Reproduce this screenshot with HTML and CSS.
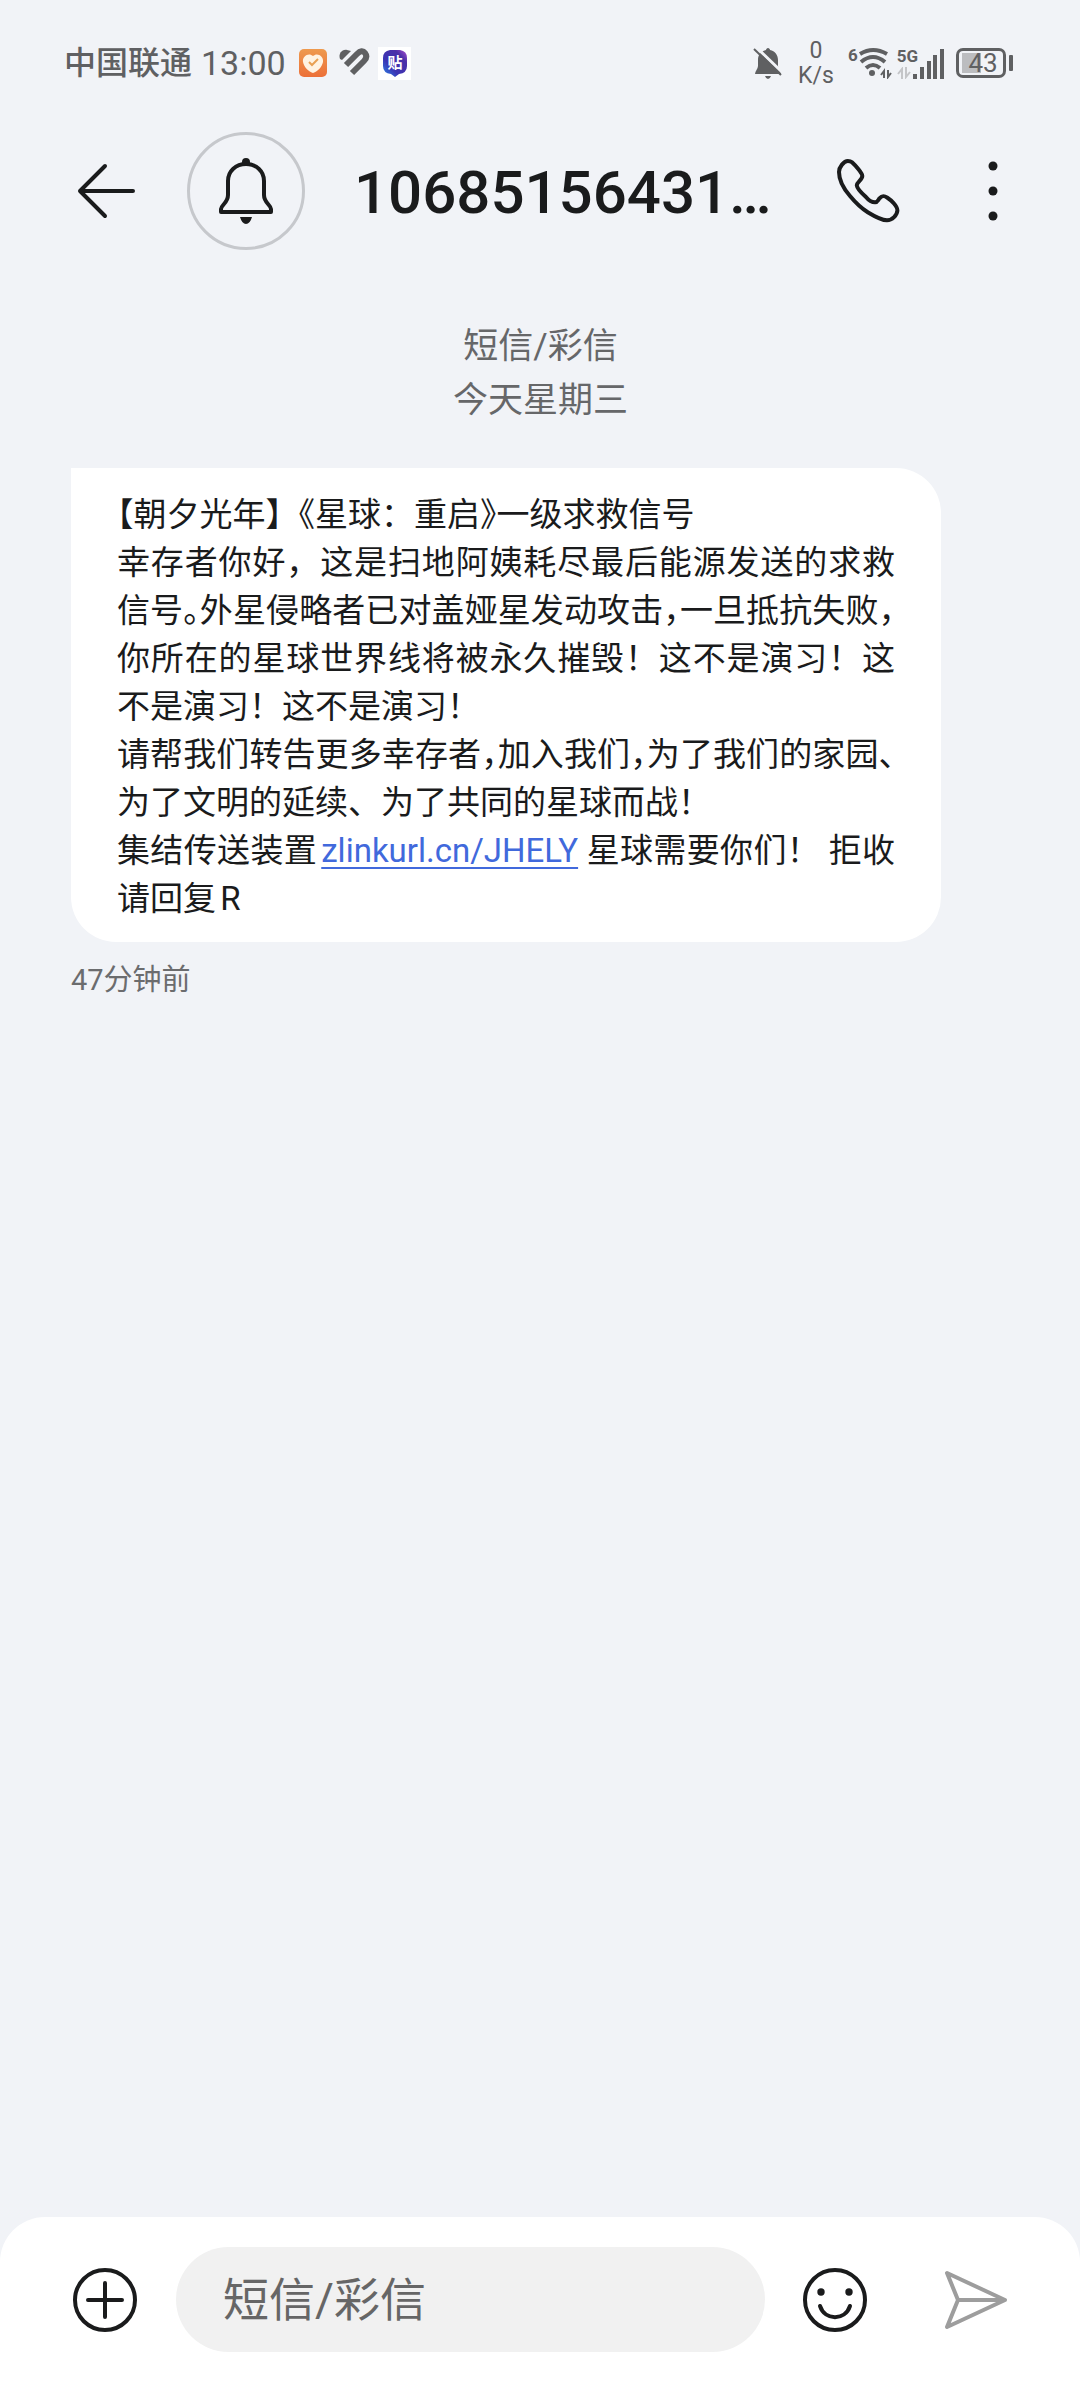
FILE: index.html
```html
<!DOCTYPE html>
<html lang="zh-CN">
<head>
<meta charset="utf-8">
<meta name="viewport" content="width=device-width, initial-scale=1">
<title>短信/彩信</title>
<link rel="stylesheet" href="styles.css">
</head>
<body>
<div class="app">
  <div class="status">
    <div class="status-left">
      <span class="carrier">中国联通</span>
      <span class="clock">13:00</span>
      <svg class="app-heart" viewBox="0 0 30 30" aria-hidden="true">
        <defs><linearGradient id="orange" x1="0" y1="0" x2="0" y2="1"><stop offset="0" stop-color="#ee9a4e"/><stop offset="1" stop-color="#ec7038"/></linearGradient></defs>
        <rect x="1" y="1" width="28" height="28" rx="5" fill="url(#orange)"/>
        <path d="M15 8C11 4 4 8 5 14C6 19 10 23 15 25C20 23 24 19 25 14C26 8 19 4 15 8Z" fill="#fff3e2"/>
        <path d="M11 14L14 17L20 11" fill="none" stroke="#e9a052" stroke-width="2"/>
      </svg>
      <svg class="app-strap" viewBox="0 0 32 30" aria-hidden="true">
        <path d="M2 11C0 6 4 1 9 2L13 3L4 12Z" fill="#5f6062"/>
        <path d="M8 17L19 6Q24 1 27 5Q30 9 26 13L14 25" fill="none" stroke="#5f6062" stroke-width="6"/>
      </svg>
      <svg class="app-tie" viewBox="0 0 33 33" aria-hidden="true">
        <defs><linearGradient id="violet" x1="0" y1="1" x2="1" y2="0"><stop offset="0" stop-color="#2b8bea"/><stop offset=".35" stop-color="#3b35b4"/><stop offset=".75" stop-color="#4a2fa8"/><stop offset="1" stop-color="#b04fd0"/></linearGradient></defs>
        <rect width="33" height="33" fill="#fff"/>
        <path d="M12 3H22Q29 4 29 11V19Q29 26 21 27L17 30L13 27Q5 26 5 19V11Q5 4 12 3Z" fill="url(#violet)"/>
        <text x="17" y="21" text-anchor="middle" class="tie-text">贴</text>
      </svg>
    </div>
    <div class="status-right">
      <svg class="mute" viewBox="0 0 30 34" aria-hidden="true">
        <path d="M15 2C16 2 17 3 17 4C22 5 25 9 25 14V20C25 23 28 25 28 28H2C2 25 5 23 5 20V14C5 9 8 5 13 4C13 3 14 2 15 2ZM12 30H18Q17 33 15 33Q13 33 12 30Z" fill="#5f6062"/>
        <path d="M3 1L30 27" stroke="#f1f3f7" stroke-width="3"/>
        <path d="M1 3L28 29" stroke="#5f6062" stroke-width="2"/>
      </svg>
      <div class="speed"><span>0</span><span>K/s</span></div>
      <div class="wifi">
        <span class="tag">6</span>
        <svg class="wifi-icon" viewBox="0 0 34 32" aria-hidden="true">
          <g fill="none" stroke="#5f6062" stroke-width="4">
            <path d="M2 7Q15 -1 29 7"/><path d="M3 15Q15 5 27 15"/><path d="M8 21Q15 15 22 21"/>
          </g>
          <circle cx="14" cy="26" r="3" fill="#5f6062"/>
          <path d="M26 31V24L23 28M30 23V30L33 26" fill="none" stroke="#5f6062" stroke-width="2"/>
        </svg>
      </div>
      <div class="cell">
        <div class="cell-tag">
          <span class="tag">5G</span>
          <svg class="cell-arrows" viewBox="0 0 14 12" aria-hidden="true"><path d="M5 12V2L1 7M9 0V10L13 5" fill="none" stroke="#c4c5c8" stroke-width="2"/></svg>
        </div>
        <svg class="bars" viewBox="0 0 32 30" aria-hidden="true">
          <path d="M1 25h4v5h-4zM8 18h4v12h-4zM15 12h4v18h-4zM21 6h4v24h-4zM28 0h4v30h-4z" fill="#5f6062"/>
        </svg>
      </div>
      <div class="battery"><span class="battery-case">43</span><span class="battery-tip"></span></div>
    </div>
  </div>

  <header class="header">
    <button class="icon-btn" aria-label="返回">
      <svg class="back" viewBox="0 0 60 60"><path d="M57 30H4M29 5L4 30L29 55" /></svg>
    </button>
    <button class="avatar" aria-label="通知">
      <svg class="bell" viewBox="0 0 72 72">
        <path d="M36 9C26 9 18 16 18 26V40C18 48 11 50 11 54V57H61V54C61 50 54 48 54 40V26C54 16 46 9 36 9Z"/>
        <path class="solid" d="M32 10V7A4 4 0 0 1 40 7V10ZM30 62H42Q40 69 36 69Q32 69 30 62Z"/>
      </svg>
    </button>
    <h1 class="title">10685156431…</h1>
    <button class="icon-btn" aria-label="拨打电话">
      <svg class="phone" viewBox="0 0 72 72"><path d="M14.800 6C11 6 6 12 6 17C6 24 10 33 17 41C22 47 28 53 34.400 57C41 61 48 65.300 54 65.300C59 65.300 64.400 60 64.400 55.300C64.400 51 58 45 54.400 42.700C51 40.500 49 40.500 46.500 43.300C44.500 46 44 47.500 42 47.300C39 47.300 35 44.500 32.700 41.700C28 37.500 24 33 23.800 30.300C23.800 27 29.300 25 29.300 21C29.300 18 22 10 19 7.300C17.500 6 16 6 14.800 6Z"/></svg>
    </button>
    <button class="icon-btn" aria-label="更多">
      <svg class="more" viewBox="0 0 40 60"><g class="solid"><circle cx="20" cy="5" r="4.500"/><circle cx="20" cy="30" r="4.500"/><circle cx="20" cy="55" r="4.500"/></g></svg>
    </button>
  </header>

  <main class="thread">
    <p class="stamp">短信/彩信<br>今天星期三</p>
    <article class="message">
      <div class="bubble">
        <p>【朝夕光年】《星球：重启<span class="half">》</span>一级求救信号</p>
        <p>幸存者你好，这是扫地阿姨耗尽最后能源发送的求救信号<span class="half">。</span>外星侵略者已对盖娅星发动攻击<span class="half">，</span>一旦抵抗失败<span class="half">，</span>你所在的星球世界线将被永久摧毁！这不是演习！这不是演习！这不是演习！</p>
        <p>请帮我们转告更多幸存者<span class="half">，</span>加入我们<span class="half">，</span>为了我们的家园<span class="half">、</span>为了文明的延续、为了共同的星球而战！</p>
        <p>集结传送装置<a href="#link">zlinkurl.cn/JHELY</a> 星球需要你们！ 拒收请回复R</p>
      </div>
      <p class="ago">47分钟前</p>
    </article>
  </main>

  <form class="composer">
    <button type="button" class="icon-btn" aria-label="添加">
      <svg class="round" viewBox="0 0 64 64"><circle cx="32" cy="32" r="30"/><path d="M15 32H49M32 15V49"/></svg>
    </button>
    <input class="field" type="text" placeholder="短信/彩信" aria-label="短信/彩信">
    <button type="button" class="icon-btn emoji" aria-label="表情">
      <svg class="round" viewBox="0 0 64 64"><circle cx="32" cy="32" r="30"/><path d="M17 38C22 53 42 53 47 38"/><g class="solid"><circle cx="18" cy="24" r="3.700"/><circle cx="46" cy="24" r="3.700"/></g></svg>
    </button>
    <button type="button" class="icon-btn send" aria-label="发送">
      <svg class="plane" viewBox="0 0 66 64"><path d="M3 5L61 32L3 59L14 32ZM14 32H61"/></svg>
    </button>
  </form>
</div>
</body>
</html>
```

FILE: styles.css
```css
* { box-sizing: border-box; margin: 0; padding: 0; }

body {
  background: #f1f3f7;
  color: #1a1b1c;
  font-family: Roboto, "Noto Sans CJK SC", sans-serif;
}

.app { display: flex; flex-direction: column; min-height: 100vh; }

svg { display: block; flex: none; }

/* status bar */
.status {
  display: flex;
  justify-content: space-between;
  align-items: center;
  height: 126px;
  padding: 0 67px 0 64px;
  color: #5f6062;
}
.status-left, .status-right { display: flex; align-items: center; }
.carrier { font-size: 32px; font-weight: 500; line-height: 40px; }
.clock { margin: 0 12px 0 9px; font-size: 34px; line-height: 40px; }
.app-heart { width: 30px; height: 30px; }
.app-strap { width: 32px; height: 30px; margin: 0 8px 0 10px; }
.app-tie { width: 33px; height: 33px; }
.tie-text { font-size: 15px; font-weight: 700; fill: #fff; }
.mute { width: 30px; height: 34px; }
.speed {
  display: flex;
  flex-direction: column;
  align-items: center;
  margin: 0 14px 0 15px;
  font-size: 23px;
  line-height: 25px;
}
.wifi, .cell { display: flex; align-items: flex-start; }
.tag { font-size: 17px; line-height: 17px; font-weight: 700; }
.wifi { margin-right: 5px; }
.wifi-icon { width: 34px; height: 32px; }
.cell-tag { display: flex; flex-direction: column; gap: 2px; }
.cell-arrows { width: 14px; height: 12px; }
.cell { align-items: flex-end; margin-right: 12px; }
.bars { width: 32px; height: 30px; margin-left: -6px; }
.battery { display: flex; align-items: center; gap: 3px; }
.battery-case {
  width: 50px;
  height: 30px;
  padding-left: 4px;
  border: 3px solid #5f6062;
  border-radius: 7px;
  background: linear-gradient(#bcbdc0, #bcbdc0) 3px center / 19px 20px no-repeat;
  font-size: 26px;
  line-height: 25px;
  text-align: center;
}
.battery-tip { width: 4px; height: 16px; border-radius: 1px; background: #5f6062; }

/* header */
button { border: 0; background: none; color: inherit; cursor: pointer; }
.icon-btn { flex: none; }
.header {
  display: flex;
  align-items: center;
  height: 130px;
  padding: 0 67px 0 76px;
}
.header svg, .composer svg {
  fill: none;
  stroke: currentColor;
  stroke-width: 4;
  stroke-linecap: round;
  stroke-linejoin: round;
}
.header svg .solid, .composer svg .solid { fill: currentColor; stroke: none; }
.back { width: 60px; height: 60px; }
.avatar {
  display: flex;
  flex: none;
  align-items: center;
  justify-content: center;
  width: 118px;
  height: 118px;
  margin: 0 49px 0 51px;
  border: 3px solid #c6c8cc;
  border-radius: 50%;
}
.bell { width: 72px; height: 72px; }
.title {
  flex: 1;
  overflow: hidden;
  padding-top: 3px;
  font-size: 60px;
  font-weight: 500;
  line-height: 72px;
  white-space: nowrap;
}
.phone { width: 72px; height: 72px; }
.more { width: 40px; height: 60px; margin-left: 68px; }

/* conversation */
.thread { flex: 1; padding: 64px 70px 64px 71px; }
.stamp { color: #666769; font-size: 35px; line-height: 54px; text-align: center; }
.message { max-width: 870px; margin-top: 40px; }
.bubble {
  padding: 23px 46px 19px;
  border-radius: 0 45px 45px 45px;
  background: #fff;
  font-size: 33px;
  line-height: 48px;
  text-align: justify;
  text-spacing-trim: trim-start;
  text-autospace: normal;
}
.half { font-feature-settings: "halt"; }
.bubble a { color: #4169dc; text-decoration-thickness: 2px; text-underline-offset: 5px; }
.ago { margin-top: 16px; color: #6b6c6e; font-size: 29px; line-height: 44px; }

/* composer */
.composer {
  display: flex;
  align-items: center;
  padding: 30px 70px 30px 73px;
  border-radius: 45px 45px 0 0;
  background: #fff;
}
.round { width: 64px; height: 64px; }
.field {
  flex: 1;
  min-width: 0;
  height: 105px;
  margin: 0 38px 0 39px;
  padding: 0 47px;
  border: 0;
  border-radius: 53px;
  background: #f1f1f1;
  color: #1a1b1c;
  font: inherit;
  font-size: 46px;
}
.field::placeholder { color: #666; opacity: 1; }
.send { margin-left: 77px; color: #9d9d9d; }
.plane { width: 66px; height: 64px; }
```
